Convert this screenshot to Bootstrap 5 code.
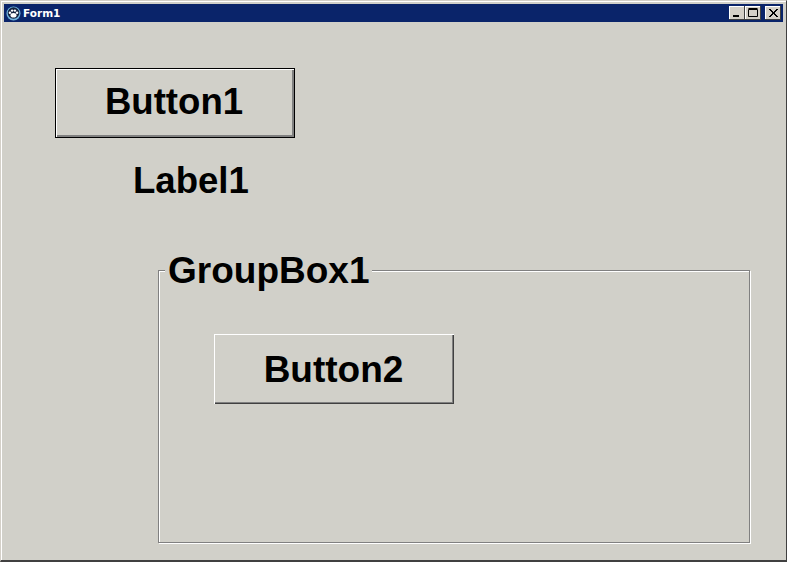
<!DOCTYPE html>
<html lang="en">
<head>
    <meta charset="UTF-8">
    <meta name="viewport" content="width=device-width, initial-scale=1.0">
    <title>Form1</title>
    <link href="https://cdn.jsdelivr.net/npm/bootstrap@5.3.0/dist/css/bootstrap.min.css" rel="stylesheet">
    <style>
        html, body {
            height: 100%;
            margin: 0;
        }
        body {
            background-color: #d4d0c8;
            overflow: hidden;
        }
        .win-frame {
            height: 562px;
            padding: 3px 3px 2px 3px;
            background-color: #d1d0c9;
            border-top: 1px solid #d4d0c8;
            border-left: 1px solid #d4d0c8;
            border-right: 1px solid #404040;
            border-bottom: 2px solid #404040;
            box-shadow: inset 1px 1px 0 #fff;
        }
        .title-strip {
            height: 18px;
            padding: 0 2px;
            background-color: #0a246a;
            color: #fff;
            font: bold 10.5px/18px "DejaVu Sans", sans-serif;
        }
        .paw-icon {
            margin-right: 2px;
        }
        .cap-btn {
            width: 16px;
            height: 14px;
            padding: 0;
            background-color: #d4d0c8;
            border: 0;
            border-radius: 0;
            box-shadow: inset -1px -1px 0 #404040, inset 1px 1px 0 #fff;
        }
        .cap-btn svg {
            display: block;
        }
        .client-area {
            font-family: "Liberation Sans", Arial, sans-serif;
            font-weight: 700;
            color: #000;
        }
        .form-btn {
            display: block;
            width: 240px;
            height: 70px;
            padding: 0 2px 1px 0;
            font-size: 36.6px;
            line-height: 1;
            color: #000;
            font-weight: 700;
            background-color: #d1d0c9;
            border: 0;
            border-radius: 0;
        }
        .btn-default {
            margin: 46px 0 0 51px;
            box-shadow: inset 0 0 0 1px #000, inset 2px 2px 0 #fff, inset -3px -3px 0 #808080;
        }
        .btn-plain {
            margin: 63px 0 0 55px;
            padding: 0 1px 0 0;
            font-size: 37px;
            box-shadow: inset 1px 1px 0 #fff, inset -1px -1px 0 #404040, inset -2px -2px 0 #808080;
        }
        .label-text {
            margin: 23px 0 0 129px;
            font-size: 36.6px;
            line-height: 40px;
        }
        .group-wrap {
            position: relative;
            width: 592px;
            height: 273px;
            margin: 69px 0 0 154px;
            border: 1px solid #808080;
            box-shadow: 1px 1px 0 #fff, inset 1px 1px 0 #fff;
        }
        .group-title {
            position: absolute;
            top: -20px;
            left: 6px;
            padding: 0 3px;
            font-size: 37px;
            line-height: 40px;
            background-color: #d1d0c9;
        }
    </style>
</head>
<body>

<div class="win-frame d-flex flex-column">
    <div class="title-strip d-flex align-items-center">
        <svg width="15" height="15" viewBox="0 0 15 15" class="paw-icon flex-shrink-0">
            <circle cx="7.5" cy="7.5" r="7" fill="#6fb2dc"/>
            <circle cx="7.5" cy="7" r="5.8" fill="#14223f"/>
            <ellipse cx="7.5" cy="9.2" rx="3" ry="2.3" fill="#fff"/>
            <circle cx="3.9" cy="6.8" r="1.2" fill="#fff"/>
            <circle cx="6.1" cy="4.6" r="1.2" fill="#fff"/>
            <circle cx="8.9" cy="4.6" r="1.2" fill="#fff"/>
            <circle cx="11.1" cy="6.8" r="1.2" fill="#fff"/>
        </svg>
        <span>Form1</span>
        <div class="d-flex ms-auto">
            <button class="cap-btn" type="button" aria-label="Minimize">
                <svg width="16" height="14" viewBox="0 0 16 14"><rect x="4" y="9" width="6" height="2" fill="#000"/></svg>
            </button>
            <button class="cap-btn" type="button" aria-label="Maximize">
                <svg width="16" height="14" viewBox="0 0 16 14"><path d="M3.5 3.5h9v7h-9z M3.5 2.5h9" fill="none" stroke="#000"/></svg>
            </button>
            <button class="cap-btn ms-1" type="button" aria-label="Close">
                <svg width="16" height="14" viewBox="0 0 16 14"><path d="M4 3l8 8M5 3l8 8M12 3l-8 8M13 3l-8 8" fill="none" stroke="#000"/></svg>
            </button>
        </div>
    </div>
    <div class="client-area flex-grow-1">
        <button class="form-btn btn-default" type="button">Button1</button>
        <div class="label-text">Label1</div>
        <div class="group-wrap">
            <div class="group-title">GroupBox1</div>
            <button class="form-btn btn-plain" type="button">Button2</button>
        </div>
    </div>
</div>

<script src="https://cdn.jsdelivr.net/npm/bootstrap@5.3.0/dist/js/bootstrap.bundle.min.js"></script>
</body>
</html>
